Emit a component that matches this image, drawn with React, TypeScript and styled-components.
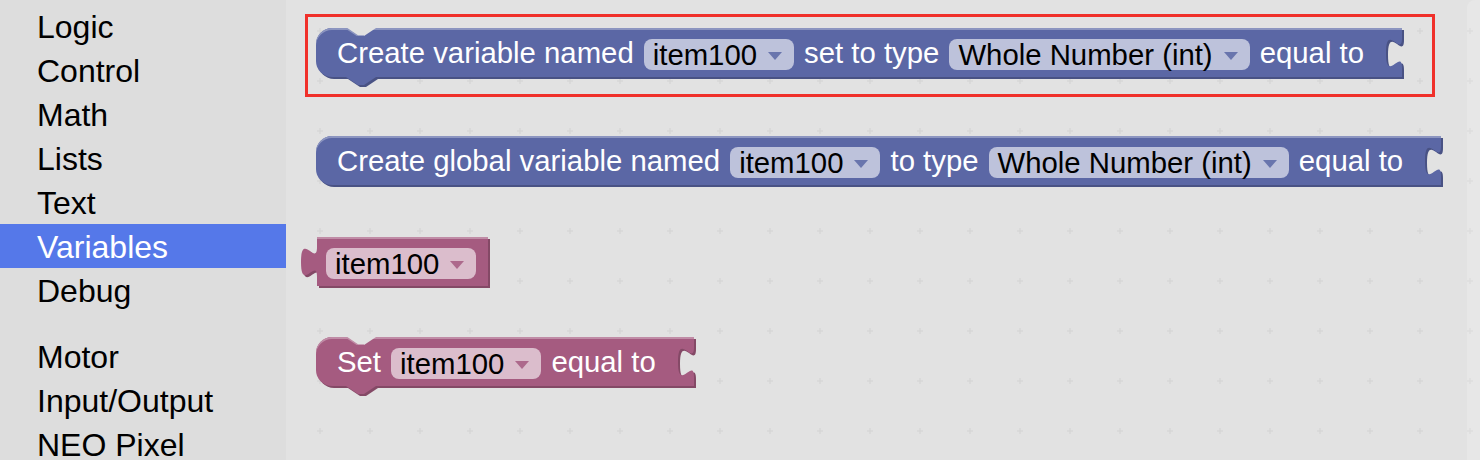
import React from 'react';
import styled, { createGlobalStyle } from 'styled-components';

const WS_BG = '#e2e2e2';

type Palette = { fill: string; light: string; dark: string; field: string };
const BLUE: Palette = { fill: '#5b67a5', light: '#8c95c0', dark: '#495284', field: '#bdc2db' };
const PINK: Palette = { fill: '#a55b80', light: '#c08ca6', dark: '#844966', field: '#dbbdcc' };

const GlobalStyle = createGlobalStyle`
  html, body { margin: 0; padding: 0; }
  body {
    font-family: "Liberation Sans", Arial, sans-serif;
    background: ${WS_BG};
  }
`;

const Page = styled.div`
  display: flex;
  width: 1480px;
  height: 460px;
  overflow: hidden;
`;

const Toolbox = styled.nav`
  width: 286px;
  flex: none;
  box-sizing: border-box;
  padding-top: 4px;
  background: #dddddd;
  display: flex;
  flex-direction: column;
`;

const Category = styled.div<{ $selected?: boolean }>`
  height: 44px;
  line-height: 46px;
  padding-left: 37px;
  font-size: 32px;
  white-space: nowrap;
  color: ${(p) => (p.$selected ? '#ffffff' : '#000000')};
  background: ${(p) => (p.$selected ? '#5578e9' : 'transparent')};
`;

const Separator = styled.div`
  height: 2px;
  margin: 10px 0 12px;
  background: #e9e9e9;
`;

const Workspace = styled.main`
  position: relative;
  flex: 1;
  background: ${WS_BG};
  overflow: hidden;
`;

const Grid = styled.svg`
  position: absolute;
  inset: 0;
  width: 100%;
  height: 100%;
`;

const BlockBody = styled.div<{ $p: Palette; $x: number; $y: number; $rounded: boolean; $padL: number; $padR: number }>`
  position: absolute;
  left: ${(p) => p.$x}px;
  top: ${(p) => p.$y}px;
  height: 49px;
  box-sizing: border-box;
  display: flex;
  align-items: center;
  gap: 10px;
  padding: 0 ${(p) => p.$padR}px 0 ${(p) => p.$padL}px;
  background: ${(p) => p.$p.fill};
  border-radius: ${(p) => (p.$rounded ? '16px 0 0 16px' : '0')};
  box-shadow: inset 0 2px 0 ${(p) => p.$p.light}, 2px 2px 0 ${(p) => p.$p.dark};
  color: #ffffff;
  font-size: 29.33px;
  white-space: nowrap;
`;

const Label = styled.span`
  line-height: 34px;
`;

const Field = styled.span<{ $p: Palette }>`
  display: inline-flex;
  align-items: center;
  gap: 11px;
  height: 31px;
  margin-top: 4px;
  padding: 0 12px 0 9px;
  border-radius: 8px;
  background: ${(p) => p.$p.field};
  color: #000000;
  line-height: 31px;
`;

const Arrow = styled.svg`
  flex: none;
  margin-top: 3px;
`;

const TopNotch = styled.svg`
  position: absolute;
  left: 30px;
  top: 0;
`;

const BottomTab = styled.svg`
  position: absolute;
  left: 30px;
  top: 49px;
`;

const OutputTab = styled.svg`
  position: absolute;
  left: -16px;
  top: 10px;
`;

const InputNotch = styled.svg`
  position: absolute;
  right: -2px;
  top: 10px;
`;

const Highlight = styled.div`
  position: absolute;
  left: 19px;
  top: 14px;
  width: 1130px;
  height: 83px;
  box-sizing: border-box;
  border: 3px solid #f0302a;
  pointer-events: none;
`;

const ScrollTrack = styled.div`
  position: absolute;
  right: 0;
  top: 0;
  bottom: 0;
  width: 13px;
  border-top-left-radius: 8px;
  background: rgba(255, 255, 255, 0.18);
`;

const TAB_RIGHT = 'c 0,20 -16,-16 -16,15 s 16,-5 16,15';

function DropArrow({ p }: { p: Palette }) {
  return (
    <Arrow width="14" height="8" viewBox="0 0 14 8">
      <polygon points="0,0 14,0 7,8" fill={p.fill} opacity="0.85" />
    </Arrow>
  );
}

function Dropdown({ p, text }: { p: Palette; text: string }) {
  return (
    <Field $p={p}>
      {text}
      <DropArrow p={p} />
    </Field>
  );
}

type BlockProps = {
  p: Palette;
  x: number;
  y: number;
  prev?: boolean;
  next?: boolean;
  output?: boolean;
  input?: boolean;
  padL: number;
  padR: number;
  children: React.ReactNode;
};

function Block({ p, x, y, prev, next, output, input, padL, padR, children }: BlockProps) {
  return (
    <BlockBody $p={p} $x={x} $y={y} $rounded={!output} $padL={padL} $padR={padR}>
      {children}
      {prev && (
        <TopNotch width="30" height="8" viewBox="0 0 30 8">
          <polygon points="0,0 12,8 18,8 30,0" fill={WS_BG} />
          <polyline points="0,0 12,8 18,8" fill="none" stroke={p.light} strokeWidth="1.5" />
        </TopNotch>
      )}
      {next && (
        <BottomTab width="32" height="10" viewBox="0 0 32 10">
          <polygon points="2,0 2,2 14,10 20,10 32,2 32,0" fill={p.dark} />
          <polygon points="0,0 12,8 18,8 30,0" fill={p.fill} />
        </BottomTab>
      )}
      {output && (
        <OutputTab width="16" height="34" viewBox="0 0 16 34">
          <path d="M18,32 c 0,-20 -16,16 -16,-15 s 16,5 16,-15 Z" fill={p.dark} />
          <path d="M16,30 c 0,-20 -16,16 -16,-15 s 16,5 16,-15 Z" fill={p.fill} />
        </OutputTab>
      )}
      {input && (
        <InputNotch width="18" height="34" viewBox="0 0 18 34">
          <rect x="0" y="0" width="18" height="34" fill={WS_BG} />
          <path d={`M0,0 H18 V2 ${TAB_RIGHT} V34 H0 Z`} fill={p.dark} />
          <path d={`M0,0 H16 ${TAB_RIGHT} V34 H0 Z`} fill={p.fill} />
        </InputNotch>
      )}
    </BlockBody>
  );
}

const categories = ['Logic', 'Control', 'Math', 'Lists', 'Text', 'Variables', 'Debug'];
const hardware = ['Motor', 'Input/Output', 'NEO Pixel'];

export default function App() {
  return (
    <>
      <GlobalStyle />
      <Page>
        <Toolbox>
          {categories.map((c) => (
            <Category key={c} $selected={c === 'Variables'}>
              {c}
            </Category>
          ))}
          <Separator />
          {hardware.map((c) => (
            <Category key={c}>{c}</Category>
          ))}
        </Toolbox>
        <Workspace>
          <Grid>
            <defs>
              <pattern id="wsgrid" x="9" y="6" width="50" height="50" patternUnits="userSpaceOnUse">
                <path d="M22,25 H28 M25,22 V28" stroke="#d7d7d7" strokeWidth="1.5" />
              </pattern>
            </defs>
            <rect width="100%" height="100%" fill="url(#wsgrid)" />
          </Grid>
          <ScrollTrack />

          <Block p={BLUE} x={30} y={28} prev next input padL={21} padR={38}>
            <Label>Create variable named</Label>
            <Dropdown p={BLUE} text="item100" />
            <Label>set to type</Label>
            <Dropdown p={BLUE} text="Whole Number (int)" />
            <Label>equal to</Label>
          </Block>

          <Block p={BLUE} x={30} y={136} input padL={21} padR={38}>
            <Label>Create global variable named</Label>
            <Dropdown p={BLUE} text="item100" />
            <Label>to type</Label>
            <Dropdown p={BLUE} text="Whole Number (int)" />
            <Label>equal to</Label>
          </Block>

          <Block p={PINK} x={31} y={237} output padL={9} padR={12}>
            <Dropdown p={PINK} text="item100" />
          </Block>

          <Block p={PINK} x={30} y={337} prev next input padL={21} padR={38}>
            <Label>Set</Label>
            <Dropdown p={PINK} text="item100" />
            <Label>equal to</Label>
          </Block>

          <Highlight />
        </Workspace>
      </Page>
    </>
  );
}
